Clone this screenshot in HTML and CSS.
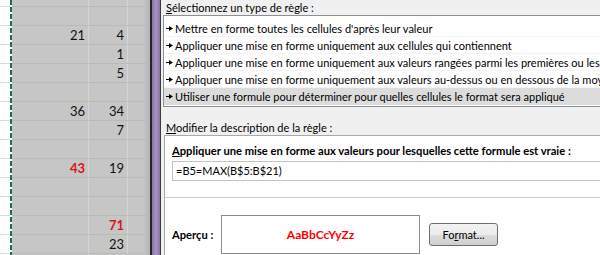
FILE: index.html
```html
<!DOCTYPE html>
<html lang="fr">

<head>
    <meta charset="UTF-8">
    <title>Nouvelle règle de mise en forme</title>
    <link rel="stylesheet" href="styles.css">
</head>

<body>
    <div class="ecran">
        <div class="feuille">
            <div class="col_a">
                <div class="cell r0"></div>
                <div class="cell"></div><div class="cell"></div><div class="cell"></div><div class="cell"></div>
                <div class="cell"></div><div class="cell"></div><div class="cell"></div><div class="cell"></div>
                <div class="cell"></div><div class="cell"></div><div class="cell"></div><div class="cell"></div>
                <div class="cell"></div><div class="cell"></div>
            </div>
            <div class="fourmis"></div>
            <div class="plage">
                <div class="ligne r0"><span></span><span></span><span></span></div>
                <div class="ligne"><span></span><span></span><span></span></div>
                <div class="ligne"><span>21</span><span>4</span><span></span></div>
                <div class="ligne"><span></span><span>1</span><span></span></div>
                <div class="ligne"><span></span><span>5</span><span></span></div>
                <div class="ligne"><span></span><span></span><span></span></div>
                <div class="ligne"><span>36</span><span>34</span><span></span></div>
                <div class="ligne"><span></span><span>7</span><span></span></div>
                <div class="ligne"><span></span><span></span><span></span></div>
                <div class="ligne"><span class="max">43</span><span>19</span><span></span></div>
                <div class="ligne"><span></span><span></span><span></span></div>
                <div class="ligne"><span></span><span></span><span></span></div>
                <div class="ligne"><span></span><span class="max">71</span><span></span></div>
                <div class="ligne"><span></span><span>23</span><span></span></div>
                <div class="ligne"><span></span><span></span><span></span></div>
            </div>
        </div>

        <div class="bord_fenetre"></div>

        <div class="dialogue">
            <div class="etiquette"><u>S</u>électionnez un type de règle :</div>
            <ul class="liste_regles">
                <li><svg class="fleche" viewBox="0 0 7 5"><path d="M0 2.5h3" stroke="#000" /><path d="M3 0L7 2.5L3 5z" /></svg>Mettre en forme toutes les cellules d'après leur valeur</li>
                <li><svg class="fleche" viewBox="0 0 7 5"><path d="M0 2.5h3" stroke="#000" /><path d="M3 0L7 2.5L3 5z" /></svg>Appliquer une mise en forme uniquement aux cellules qui contiennent</li>
                <li><svg class="fleche" viewBox="0 0 7 5"><path d="M0 2.5h3" stroke="#000" /><path d="M3 0L7 2.5L3 5z" /></svg>Appliquer une mise en forme uniquement aux valeurs rangées parmi les premières ou les dernières valeurs</li>
                <li><svg class="fleche" viewBox="0 0 7 5"><path d="M0 2.5h3" stroke="#000" /><path d="M3 0L7 2.5L3 5z" /></svg>Appliquer une mise en forme uniquement aux valeurs au-dessus ou en dessous de la moyenne</li>
                <li class="choisi"><svg class="fleche" viewBox="0 0 7 5"><path d="M0 2.5h3" stroke="#000" /><path d="M3 0L7 2.5L3 5z" /></svg>Utiliser une formule pour déterminer pour quelles cellules le format sera appliqué</li>
            </ul>

            <div class="etiquette modifier"><u>M</u>odifier la description de la règle :</div>
            <div class="panneau">
                <div class="regle">
                    <div class="titre"><u>A</u>ppliquer une mise en forme aux valeurs pour lesquelles cette formule est vraie :</div>
                    <div class="formule">=B5=MAX(B$5:B$21)</div>
                </div>
                <div class="apercu">
                    <span class="apercu_label">Aperçu :</span>
                    <div class="apercu_boite">AaBbCcYyZz</div>
                    <button class="bouton">Fo<u>r</u>mat...</button>
                </div>
            </div>
        </div>
    </div>
</body>

</html>
```

FILE: styles.css
```css
* {
    padding: 0;
    margin: 0;
    box-sizing: border-box;
}

body {
    width: 600px;
    height: 255px;
    overflow: hidden;
    background: #f0f0f0;
}

.ecran {
    display: flex;
    height: 255px;
    overflow: hidden;
}

/* feuille excel */
.feuille {
    display: flex;
    width: 150px;
    flex-shrink: 0;
    font-family: Lato, "Liberation Sans", sans-serif;
    font-size: 13px;
}

.col_a {
    width: 10px;
    background: #fff;
}

.col_a .cell {
    height: 19px;
    border-bottom: 1px solid #d4dfce;
}

.col_a .r0,
.plage .r0 {
    height: 7px;
}

.fourmis {
    width: 2px;
    background: repeating-linear-gradient(to bottom, #1d7044 0 5px, #fff 5px 7px);
}

.plage {
    flex: 1;
    background: #c6c6c6;
}

.ligne {
    display: grid;
    grid-template-columns: 77px 39px 22px;
    height: 19px;
    border-bottom: 1px solid #b4c0ae;
}

.ligne span {
    display: flex;
    align-items: center;
    justify-content: flex-end;
    padding-right: 3px;
    border-right: 1px solid #d6d6d6;
    color: #111;
}

.ligne span:last-child {
    border-right: none;
    background: linear-gradient(to right, #c6c6c6 70%, #b4b4b4);
}

.ligne .max {
    color: #d9141b;
    font-weight: bold;
}

.bord_fenetre {
    width: 11px;
    flex-shrink: 0;
    border-left: 2px solid #262626;
    border-right: 1px solid #3b3b3b;
    background: linear-gradient(to right, #8a73a6, #a893c2 50%, #8a73a6);
}

/* boite de dialogue */
.dialogue {
    flex: 1;
    min-width: 0;
    padding-left: 2px;
    font-family: Lato, "Noto Sans", sans-serif;
    font-size: 11px;
    color: #000;
}

.etiquette {
    height: 15px;
    line-height: 15px;
    padding-left: 3px;
    white-space: nowrap;
}

.liste_regles {
    list-style: none;
    width: 600px;
    height: 92px;
    padding-top: 4px;
    background: #fff;
    border: 1px solid #8c8f96;
}

.liste_regles li {
    display: flex;
    align-items: center;
    height: 17px;
    padding-left: 2px;
    white-space: nowrap;
    border-bottom: 1px solid #f4f4f4;
}

.liste_regles li.choisi {
    background: #dcdcdc;
    border-bottom: none;
}

.fleche {
    width: 7px;
    height: 5px;
    margin-right: 2px;
    flex-shrink: 0;
}

.modifier {
    margin-top: 13px;
}

.panneau {
    width: 600px;
    margin-left: 1px;
    height: 130px;
    background: #fff;
    border: 1px solid #a9a9a9;
}

.regle {
    padding: 7px 0 16px 7px;
    border-bottom: 1px solid #cfcfcf;
}

.titre {
    height: 15px;
    line-height: 15px;
    font-size: 11.2px;
    font-weight: bold;
    white-space: nowrap;
    margin-bottom: 3px;
}

.formule {
    height: 20px;
    line-height: 18px;
    padding-left: 3px;
    border: 1px solid #c3c3c3;
}

.apercu {
    display: flex;
    align-items: center;
    margin-top: 17px;
    padding-left: 7px;
}

.apercu_label {
    width: 49px;
    font-size: 11.2px;
    font-weight: bold;
}

.apercu_boite {
    width: 199px;
    height: 39px;
    display: flex;
    align-items: center;
    justify-content: center;
    border: 1px solid #8c8c8c;
    color: #ff0000;
    font-weight: bold;
    font-size: 12px;
}

.bouton {
    width: 69px;
    height: 23px;
    margin-left: 9px;
    font-family: Lato, "Noto Sans", sans-serif;
    font-size: 11px;
    color: #000;
    border: 1px solid #707070;
    border-radius: 3px;
    background: linear-gradient(to bottom, #f2f2f2 0%, #ebebeb 50%, #dddddd 51%, #cfcfcf 100%);
}
```
